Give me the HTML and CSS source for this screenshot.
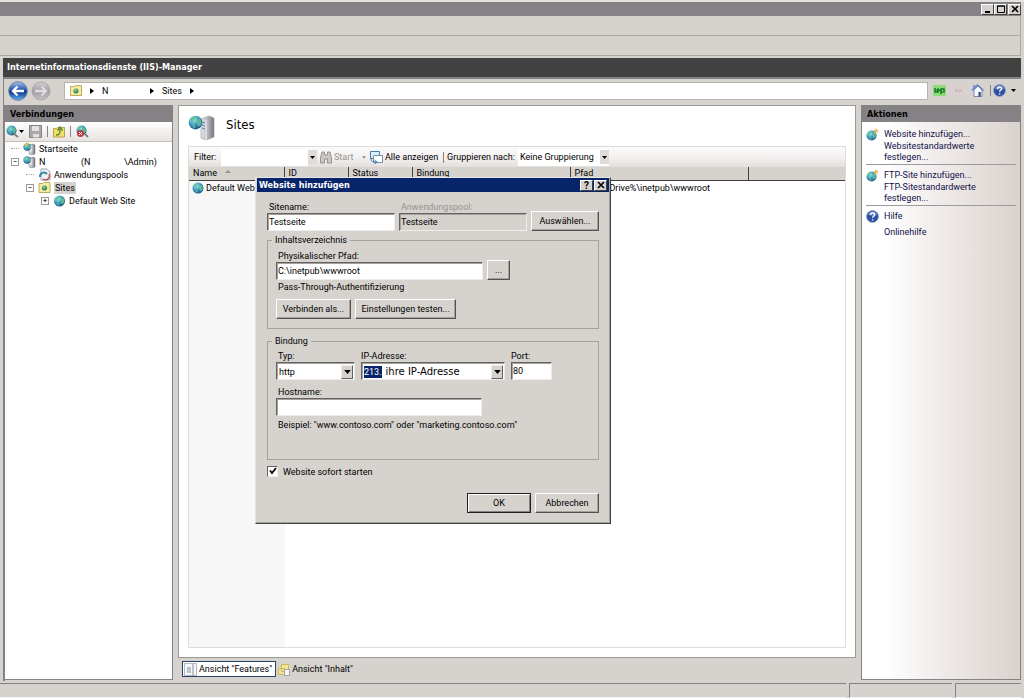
FILE: index.html
```html
<!DOCTYPE html>
<html lang="de">
<head>
<meta charset="utf-8">
<title>Internetinformationsdienste (IIS)-Manager</title>
<link rel="stylesheet" href="styles.css">
</head>
<body>
<svg class="defs" aria-hidden="true">
  <defs>
    <radialGradient id="globe-fill" cx="35%" cy="30%" r="75%">
      <stop offset="0" stop-color="#c5eef9"/><stop offset=".5" stop-color="#3c96c4"/><stop offset="1" stop-color="#1b4f83"/>
    </radialGradient>
    <linearGradient id="server-fill" x1="0" x2="1">
      <stop offset="0" stop-color="#e4e6ea"/><stop offset=".5" stop-color="#b4b7bd"/><stop offset="1" stop-color="#74777e"/>
    </linearGradient>
    <linearGradient id="nav-blue" x1="0" y1="0" x2="0" y2="1">
      <stop offset="0" stop-color="#a9c2ea"/><stop offset=".45" stop-color="#2452ad"/><stop offset=".55" stop-color="#0d358f"/><stop offset="1" stop-color="#5fb9f2"/>
    </linearGradient>
    <linearGradient id="nav-gray" x1="0" y1="0" x2="0" y2="1">
      <stop offset="0" stop-color="#d6d3d6"/><stop offset=".5" stop-color="#a19ca4"/><stop offset="1" stop-color="#c4c0c6"/>
    </linearGradient>
    <symbol id="globe" viewBox="0 0 12 12">
      <circle cx="6" cy="6" r="5.5" fill="url(#globe-fill)"/>
      <path d="M2 3.2C3 1.8 4.6 1 6 1.2l.6 1.3-1.7 1.2L4.600 5.600 2.600 6zM7 4l2.300-1.500 1.500 2.500-.3 2.600L8.500 9.500 7.300 7.300zM3.200 7.500l2.300.6.2 2L4.600 10.800z" fill="#5cc290" opacity=".9"/>
    </symbol>
    <symbol id="site-new" viewBox="0 0 13 13">
      <use href="#globe" x="0" y="2" width="11" height="11"/>
      <path d="M10 0l.7 1.800L13 2l-1.600 1.300.6 2L10 4.200 8.200 5.300l.5-2L7.200 2l2-.2z" fill="#edb65b"/>
    </symbol>
    <symbol id="server" viewBox="0 0 13 13">
      <path d="M6 3l4-1 2 1v9l-4 1-2-1z" fill="url(#server-fill)" stroke="#6e7788" stroke-width=".5"/>
      <path d="M6.500 5h3M6.500 7h3M6.500 9h3" stroke="#fff" stroke-width=".8"/>
      <use href="#globe" x="0" y="1" width="8" height="8"/>
    </symbol>
    <symbol id="server-home" viewBox="0 0 13 13">
      <use href="#server"/>
      <path d="M1 3l3-3 2 2-3 2z" fill="#e8c34e"/>
    </symbol>
    <symbol id="folder-site" viewBox="0 0 12 11">
      <path d="M.5 1.500h4l1-1h6v10H.5z" fill="#f4eca3" stroke="#b9ac5c"/>
      <circle cx="6" cy="6" r="2.600" fill="#4b9161"/><circle cx="5.500" cy="5.300" r="1" fill="#a4dbb3"/>
    </symbol>
    <symbol id="help" viewBox="0 0 13 13">
      <circle cx="6.500" cy="6.500" r="6" fill="#2c4f9f" stroke="#8fa5cf"/>
      <path d="M2 5a4.600 4.600 0 0 1 9 0Q6.500 6.500 2 5z" fill="#7f9bd8" opacity=".7"/>
      <path d="M4.600 5c0-2.700 4-2.600 4-.3 0 1.500-2 1.500-2 3M6.600 9.300v1.300" fill="none" stroke="#fff" stroke-width="1.400"/>
    </symbol>
    <symbol id="down" viewBox="0 0 5 3"><path d="M0 0h5L2.500 3z" fill="#000"/></symbol>
    <symbol id="right" viewBox="0 0 4 6"><path d="M0 0l4 3-4 3z" fill="#000"/></symbol>
    <symbol id="close" viewBox="0 0 8 8"><path d="M1 1l6 6M7 1L1 7" stroke="#000" stroke-width="1.600"/></symbol>
  </defs>
</svg>

<div class="window">
  <header class="titlebar">
    <button class="caption" aria-label="Minimieren"><svg width="8" height="8" viewBox="0 0 8 8"><path d="M1 7h5" stroke="#000" stroke-width="2"/></svg></button>
    <button class="caption" aria-label="Maximieren"><svg width="8" height="8" viewBox="0 0 8 8"><path d="M.5 1h7v6.500h-7zM0 1h8" fill="none" stroke="#000"/></svg></button>
    <button class="caption caption-gap" aria-label="Schließen"><svg width="8" height="8"><use href="#close"/></svg></button>
  </header>
  <div class="strip"></div>
  <div class="strip"></div>

  <h1 class="app-title">Internetinformationsdienste (IIS)-Manager</h1>

  <nav class="address-row">
    <button class="nav" aria-label="Zurück"><svg width="20" height="20" viewBox="0 0 20 20"><circle cx="10" cy="10" r="9.300" fill="url(#nav-blue)" stroke="#6c7fa5"/><path d="M16 10H5M9.500 5.500L5 10l4.500 4.500" fill="none" stroke="#fff" stroke-width="2.300"/></svg></button>
    <button class="nav" aria-label="Vorwärts"><svg width="20" height="20" viewBox="0 0 20 20"><circle cx="10" cy="10" r="9" fill="url(#nav-gray)" stroke="#aaa6aa"/><path d="M4 10h11M10.500 5.500L15 10l-4.500 4.500" fill="none" stroke="#dedbde" stroke-width="2.300"/></svg></button>
    <div class="address">
      <svg width="12" height="11"><use href="#folder-site"/></svg>
      <svg width="4" height="6"><use href="#right"/></svg>
      <a class="crumb crumb-host" href="#">N</a>
      <svg width="4" height="6"><use href="#right"/></svg>
      <a class="crumb" href="#">Sites</a>
      <svg width="4" height="6"><use href="#right"/></svg>
    </div>
    <div class="address-tools">
      <button class="flat" aria-label="Aktualisieren"><svg width="13" height="13" viewBox="0 0 13 13"><rect y="1" width="13" height="11" rx="1" fill="#8edc78"/><path d="M2 4v4h3V5l-1.500 1.500M11 9V5H8v4l1.500-1.500M5 6.500h3" fill="none" stroke="#157a22" stroke-width="1.500"/></svg></button>
      <button class="flat" aria-label="Anhalten"><svg width="13" height="13" viewBox="0 0 13 13"><rect y="1" width="13" height="11" rx="1" fill="#dccfd0"/><path d="M3 5l3 3M6 5L3 8M7 5l3 3M10 5L7 8" stroke="#b9aeb0"/></svg></button>
      <button class="flat" aria-label="Startseite"><svg width="13" height="13" viewBox="0 0 13 13"><path d="M3 6v6.500h8V6L7 2z" fill="#f4f8ff" stroke="#7788b4"/><path d="M.8 6.500L6.500 1l6 5.500M3 1v3" fill="none" stroke="#6683c9" stroke-width="1.500"/><path d="M7.500 8h2.200v4.500H7.500z" fill="#36457a"/></svg></button>
      <span class="divider"></span>
      <button class="flat help-menu" aria-label="Hilfe"><svg width="13" height="13"><use href="#help"/></svg><svg width="5" height="3"><use href="#down"/></svg></button>
    </div>
  </nav>

  <main class="workspace">
    <aside class="panel connections">
      <h2 class="panel-title">Verbindungen</h2>
      <div class="tree-tools">
        <button class="flat" aria-label="Verbinden"><svg width="13" height="13"><use href="#globe" width="11" height="11"/><path d="M8 9l4 3" stroke="#807f80" stroke-width="2"/></svg><svg width="5" height="3"><use href="#down"/></svg></button>
        <button class="flat" aria-label="Speichern"><svg width="13" height="13" viewBox="0 0 13 13"><path d="M.5.5h12v12H.5z" fill="#aaa7aa" stroke="#858285"/><path d="M3 1h7v5H3zM4 9h6v3.500H4z" fill="#e4e1e3"/></svg></button>
        <span class="divider"></span>
        <button class="flat" aria-label="Aufwärts"><svg width="12" height="13" viewBox="0 0 12 13"><path d="M.5 3.500h3l1-1h7v9.500H.5z" fill="#f1df6d" stroke="#b5a44b"/><path d="M3 10c4 0 4-2 4-6M4.500 5.500L7 2l2.500 3.500" fill="none" stroke="#53842d" stroke-width="1.300"/></svg></button>
        <span class="divider"></span>
        <button class="flat" aria-label="Trennen"><svg width="13" height="13" viewBox="0 0 13 13"><use href="#globe" width="11" height="11"/><circle cx="4.500" cy="8.500" r="3.500" fill="#c23a3e"/><path d="M3 7l3 3M6 7l-3 3" stroke="#fff"/><path d="M9 9l3 3" stroke="#807f80" stroke-width="2"/></svg></button>
      </div>
      <ul class="tree">
        <li class="row level-0"><span class="stub"></span><svg width="13" height="13"><use href="#server-home"/></svg>Startseite</li>
        <li class="row level-0"><button class="toggle" aria-label="Reduzieren">−</button><svg width="13" height="13"><use href="#server"/></svg><span class="host">N</span><span class="host-user">(N</span>\Admin)</li>
        <li class="row level-1"><span class="stub"></span><svg width="13" height="13" viewBox="0 0 13 13"><path d="M3 1h6l3 3v8H3z" fill="#eef2f6" stroke="#9ba9b6"/><path d="M2 9a4 4 0 0 1 7-3" fill="none" stroke="#3a86a5" stroke-width="2"/><path d="M11 6a4 4 0 0 1-6 5" fill="none" stroke="#b85754" stroke-width="1.500"/></svg>Anwendungspools</li>
        <li class="row level-1"><button class="toggle" aria-label="Reduzieren">−</button><svg width="13" height="11"><use href="#folder-site"/></svg><span class="selected">Sites</span></li>
        <li class="row level-2"><button class="toggle" aria-label="Erweitern">+</button><svg width="13" height="12"><use href="#globe"/></svg>Default Web Site</li>
      </ul>
    </aside>

    <section class="center">
      <div class="content">
        <div class="heading">
          <svg width="27" height="28" viewBox="0 0 27 28"><path d="M13 6l8-3 5 2v19l-8 3-5-2z" fill="url(#server-fill)" stroke="#96999f" stroke-width=".6"/><path d="M18 7v20" stroke="#f1f2f4"/><path d="M14 9l3 1M14 12l3 1M14 15l3 1" stroke="#5c80bd"/><use href="#globe" x="0" y="2" width="15" height="15"/></svg>
          <h2 class="page-name">Sites</h2>
        </div>
        <div class="list">
          <div class="filter-bar">
            <label for="filter">Filter:</label>
            <input class="filter-input" id="filter" type="text">
            <button class="drop" aria-label="Filterverlauf"><svg width="5" height="3"><use href="#down"/></svg></button>
            <button class="flat disabled start" disabled><svg width="12" height="13" viewBox="0 0 12 13"><path d="M2 1h2.500v3h3V1H10l1.500 6v5h-4V8h-3v4h-4V7z" fill="#ccc8c8" stroke="#969292"/></svg>Start</button>
            <svg class="start-arrow" width="4" height="3"><use href="#down"/></svg>
            <button class="flat show-all"><svg width="13" height="13" viewBox="0 0 13 13"><path d="M.5.500h9v7h-9z" fill="#e0edfb" stroke="#4479a8"/><path d="M3.500 4.500h9v7h-9z" fill="#fff" stroke="#7091b1"/><path d="M1 7c0 3 1 4 5 4M4.500 9L7 11l-2.500 2" fill="none" stroke="#3279b0"/></svg>Alle anzeigen</button>
            <span class="divider"></span>
            <label class="group-label" for="group">Gruppieren nach:</label>
            <span class="group-box"><select id="group"><option>Keine Gruppierung</option></select><span class="drop"><svg width="5" height="3"><use href="#down"/></svg></span></span>
          </div>
          <table class="sites">
            <colgroup><col class="col-name"><col class="col-id"><col class="col-status"><col class="col-binding"><col class="col-path"><col></colgroup>
            <thead><tr><th>Name<svg class="sort" width="6" height="3" viewBox="0 0 6 3"><path d="M0 3l3-3 3 3z" fill="#96938f"/></svg></th><th>ID</th><th>Status</th><th>Bindung</th><th>Pfad</th><th></th></tr></thead>
            <tbody><tr><td><span class="site-cell"><svg width="12" height="12"><use href="#globe"/></svg>Default Web Site</span></td><td></td><td></td><td></td><td>%SystemDrive%\inetpub\wwwroot</td><td></td></tr></tbody>
          </table>
        </div>
      </div>
      <div class="views">
        <button class="view active"><svg width="13" height="13" viewBox="0 0 13 13"><path d="M.5.500h12v12H.5z" fill="#f6f7f9" stroke="#b4b7c0"/><path d="M9 1v11.500M3 5h4M3 7h4M3 9h4" stroke="#848ba0"/></svg>Ansicht "Features"</button>
        <button class="view"><svg width="12" height="13" viewBox="0 0 12 13"><path d="M.5 5.500h6v6h-6zM3.500 1.500h7v7h-7z" fill="#f2e498" stroke="#cdb75c"/><path d="M6.500 6.500h5v6h-5z" fill="#f7f7f7" stroke="#a1a4af"/></svg>Ansicht "Inhalt"</button>
      </div>
    </section>

    <aside class="panel actions">
      <h2 class="panel-title">Aktionen</h2>
      <div class="action-list">
        <div class="action-group">
          <svg width="13" height="13"><use href="#site-new"/></svg>
          <a href="#">Website hinzufügen...</a>
          <a class="wide" href="#">Websitestandardwerte festlegen...</a>
        </div>
        <div class="action-group">
          <svg width="13" height="13"><use href="#site-new"/></svg>
          <a href="#">FTP-Site hinzufügen...</a>
          <a class="wide" href="#">FTP-Sitestandardwerte festlegen...</a>
        </div>
        <div class="action-group help-group">
          <svg width="13" height="13"><use href="#help"/></svg>
          <a href="#">Hilfe</a>
          <a class="wide" href="#">Onlinehilfe</a>
        </div>
      </div>
    </aside>
  </main>

  <footer class="status"><span class="status-main"></span><span class="status-mid"></span><span class="status-end"></span></footer>
</div>

<form class="dialog" role="dialog" aria-labelledby="dialog-title">
  <div class="dialog-title">
    <h2 id="dialog-title">Website hinzufügen</h2>
    <button type="button" class="caption" aria-label="Hilfe"><b>?</b></button>
    <button type="button" class="caption" aria-label="Schließen"><svg width="8" height="8"><use href="#close"/></svg></button>
  </div>
  <div class="dialog-body">
    <div class="fields">
      <div class="field name-field"><label for="name">Sitename:</label><input id="name" type="text" value="Testseite"></div>
      <div class="field name-field"><label class="disabled" for="pool">Anwendungspool:</label><input id="pool" type="text" value="Testseite" readonly></div>
      <button type="button" class="push grow">Auswählen...</button>
    </div>
    <fieldset class="directory">
      <legend>Inhaltsverzeichnis</legend>
      <div class="fields">
        <div class="field path-field"><label for="path">Physikalischer Pfad:</label><input id="path" type="text" value="C:\inetpub\wwwroot"></div>
        <button type="button" class="push browse">...</button>
      </div>
      <p class="note">Pass-Through-Authentifizierung</p>
      <div class="fields">
        <button type="button" class="push connect">Verbinden als...</button>
        <button type="button" class="push test">Einstellungen testen...</button>
      </div>
    </fieldset>
    <fieldset class="binding">
      <legend>Bindung</legend>
      <div class="fields binding-fields">
        <div class="field type-field"><label for="type">Typ:</label><span class="combo"><select id="type"><option>http</option></select><span class="combo-arrow"><svg width="7" height="4"><use href="#down"/></svg></span></span></div>
        <div class="field ip-field"><label for="ip">IP-Adresse:</label><span class="combo"><mark>213.</mark><input id="ip" type="text" value="ihre IP-Adresse"><button type="button" class="combo-arrow" aria-label="Adressen"><svg width="7" height="4"><use href="#down"/></svg></button></span></div>
        <div class="field port-field"><label for="port">Port:</label><input id="port" type="text" value="80"></div>
      </div>
      <div class="field host-field"><label for="host">Hostname:</label><input id="host" type="text"></div>
      <p class="example">Beispiel: "www.contoso.com" oder "marketing.contoso.com"</p>
    </fieldset>
    <label class="check"><input type="checkbox" checked><svg class="tick" width="8" height="8" viewBox="0 0 8 8"><path d="M1 3.500l2 2.500 4-5" fill="none" stroke="#000" stroke-width="1.800"/></svg>Website sofort starten</label>
    <div class="dialog-actions">
      <button type="submit" class="push default">OK</button>
      <button type="button" class="push">Abbrechen</button>
    </div>
  </div>
</form>
</body>
</html>
```
FILE: styles.css
```css
* { box-sizing: border-box; }

:root {
  --face: #d6d3ce;
  --shadow: #848284;
  --dark: #424142;
  --line: #9c9a96;
  --title-font: "DejaVu Sans Condensed", "DejaVu Sans", sans-serif;
}

body {
  margin: 0;
  background: var(--face);
  color: #000;
  font-family: Roboto, "Liberation Sans", sans-serif;
  font-size: 9px;
  line-height: 12px;
}

h1, h2, p, ul { margin: 0; padding: 0; }
ul { list-style: none; }
svg { display: block; flex: none; }
a { color: inherit; text-decoration: none; }
button, input, select { margin: 0; font: inherit; color: inherit; border-radius: 0; }
.defs { position: absolute; width: 0; height: 0; }

.window {
  display: flex;
  flex-direction: column;
  height: 100vh;
  padding-right: 3px;
  border-top: 2px solid #e4e2de;
}

.titlebar {
  display: flex;
  justify-content: flex-end;
  align-items: center;
  height: 14px;
  background: var(--shadow);
}

.caption {
  display: grid;
  place-items: center;
  width: 13px;
  height: 11px;
  padding: 0;
  background: var(--face);
  border: 1px solid;
  border-color: #fff #424142 #424142 #fff;
  font-size: 10px;
  line-height: 9px;
}
.caption-gap { margin-left: 1px; }

.strip { height: 20px; border-bottom: 1px solid #aaa7a2; border-right: 1px solid #aaa7a2; }

.app-title {
  height: 19px;
  margin: 2px 0 0 3px;
  padding: 0 4px;
  background: #424142;
  color: #fff;
  font-family: var(--title-font);
  font-stretch: condensed;
  font-size: 9px;
  line-height: 19px;
}

.address-row {
  display: flex;
  align-items: center;
  height: 28px;
  margin-left: 3px;
  padding: 0 5px 3px 4px;
  border-top: 2px solid var(--shadow);
  border-left: 1px solid var(--shadow);
}
.nav { padding: 0; margin-right: 3px; border: 0; background: none; }
.address {
  display: flex;
  flex: 1;
  align-items: center;
  gap: 8px;
  height: 18px;
  margin: 0 5px 0 10px;
  padding: 0 5px;
  background: #fff;
  border: 1px solid #b5b2ad;
}
.crumb-host { width: 40px; }
.address-tools { display: flex; align-items: center; gap: 6px; }
.address-tools .divider { margin-right: -4px; }
.flat { display: flex; align-items: center; gap: 2px; padding: 0; border: 0; background: none; white-space: nowrap; }
.help-menu { gap: 5px; }
.divider { width: 1px; height: 11px; background: var(--shadow); }

.workspace {
  display: grid;
  grid-template-columns: 168px minmax(0, 1fr) 160px;
  gap: 5px;
  flex: 1;
  min-height: 0;
  margin-left: 3px;
  border-left: 2px solid var(--shadow);
  padding-bottom: 1px;
}

.panel { background: #fff; border: 1px solid var(--shadow); border-top: 0; min-height: 0; }
.connections { border-left: 0; }
.panel-title {
  height: 17px;
  padding-left: 5px;
  background: var(--shadow);
  color: #000;
  font-family: var(--title-font);
  font-stretch: condensed;
  font-size: 9px;
  line-height: 18px;
}
.tree-tools {
  display: flex;
  align-items: center;
  gap: 5px;
  height: 20px;
  padding-left: 1px;
  background: linear-gradient(#fff, #e7e3e1);
  border-bottom: 1px solid #c6c3be;
}
.tree-tools .flat { gap: 0; }

.row { display: flex; align-items: center; gap: 3px; height: 13px; white-space: nowrap; }
.tree .row svg { margin-left: 1px; }
.level-0 { padding-left: 6px; }
.level-1 { padding-left: 21px; }
.level-2 { padding-left: 36px; }
.stub { width: 8px; height: 1px; border-top: 1px dotted #aaa7a2; }
.toggle {
  display: grid;
  place-items: center;
  width: 8px;
  height: 8px;
  padding: 0;
  background: #fff;
  border: 1px solid #9c9a9c;
  font-size: 8px;
  line-height: 6px;
}
.host { width: 39px; }
.host-user { width: 40px; }
.selected { background: var(--face); padding: 0 1px; }

.center { display: flex; flex-direction: column; min-width: 0; min-height: 0; }
.content {
  display: flex;
  flex-direction: column;
  flex: 1;
  min-height: 0;
  padding: 0 9px 9px;
  background: #fff;
  border: 1px solid var(--line);
}
.heading { display: flex; align-items: center; gap: 11px; height: 40px; padding-top: 2px; }
.page-name {
  padding-bottom: 4px;
  font-family: var(--title-font);
  font-stretch: condensed;
  font-size: 13px;
  font-weight: normal;
  line-height: 16px;
}

.list {
  flex: 1;
  min-height: 0;
  border: 1px solid #dedbd8;
  background: linear-gradient(90deg, #f7f7f8 96px, #fff 96px);
}
.filter-bar {
  display: flex;
  align-items: center;
  height: 20px;
  padding-left: 5px;
  background: linear-gradient(#fafafa, #f5f1f1 50%, #e2dfdc);
  white-space: nowrap;
}
.filter-bar label[for="filter"] { width: 27px; }
.filter-input { width: 87px; height: 17px; padding: 0 2px; border: 0; background: #fff; }
.drop { display: grid; place-items: center; width: 9px; height: 14px; padding: 0; border: 0; background: #dedbd8; }
.start { width: 36px; margin-left: 3px; }
.disabled, .flat:disabled { color: #96938f; }
.start-arrow { margin: 0 4px 0 6px; opacity: .4; }
.show-all { width: 67px; }
.filter-bar .divider { margin: 0 3px 0 6px; }
.group-label { width: 71px; }
.group-box { display: flex; align-items: center; background: #fff; }
.group-box select { width: 82px; height: 17px; padding: 0 2px; border: 0; background: #fff; appearance: none; }

.sites { width: 100%; table-layout: fixed; border-collapse: collapse; text-align: left; }
.col-name { width: 95px; }
.col-id { width: 64px; }
.col-status { width: 64px; }
.col-binding { width: 158px; }
.col-path { width: 178px; }
.sites th {
  height: 13px;
  padding: 0 4px;
  background: var(--face);
  border-bottom: 1px solid var(--dark);
  border-right: 1px solid var(--dark);
  font-weight: normal;
  line-height: 12px;
}
.sites th:last-child { border-right: 0; }
.sort { display: inline-block; margin: 0 0 3px 8px; }
.sites td { height: 15px; padding: 0 3px; white-space: nowrap; }
.site-cell { display: flex; align-items: center; gap: 2px; }

.views { display: flex; align-items: center; height: 22px; padding-left: 4px; }
.view {
  display: flex;
  align-items: center;
  gap: 2px;
  height: 16px;
  padding: 0 3px 0 1px;
  border: 1px solid transparent;
  background: none;
}
.view.active { background: #fff; border-color: #29416b; }

.actions { display: flex; flex-direction: column; }
.action-list {
  flex: 1;
  padding: 5px 4px 0;
  background: linear-gradient(90deg, #fff 15%, #f5f0f0 40%, #d9d2cd);
  color: #101048;
}
.action-group {
  display: grid;
  grid-template-columns: 13px 1fr;
  column-gap: 5px;
  align-items: center;
  margin-bottom: 3px;
  border-bottom: 1px solid #9c9a9c;
  line-height: 14px;
}
.wide { grid-column: 2; width: 100px; margin-bottom: 1px; line-height: 11px; }
.help-group { border: 0; row-gap: 4px; }

.status { display: flex; gap: 3px; height: 15px; margin-top: 2px; }
.status span { border-top: 1px solid var(--shadow); border-bottom: 1px solid #f5f3f0; border-left: 1px solid var(--shadow); }
.status .status-main { flex: 1; border-left: 0; }
.status-mid { width: 103px; }
.status-end { width: 66px; }

/* Dialog */
.dialog {
  position: absolute;
  left: 255px;
  top: 177px;
  width: 356px;
  background: var(--face);
  border: 1px solid;
  border-color: #e7e5e1 #424142 #424142 #e7e5e1;
  box-shadow: inset -1px -1px #a5a29c;
}
.dialog-title {
  display: flex;
  align-items: center;
  gap: 1px;
  height: 14px;
  margin: 0 1px;
  padding: 0 2px;
  background: #08246b;
  color: #fff;
}
.dialog-title h2 { flex: 1; font-family: var(--title-font); font-stretch: condensed; font-size: 9px; }
.dialog-title .caption { color: #000; }
.dialog-body { padding: 9px 11px 10px; }
.fields { display: flex; align-items: flex-end; gap: 4px; }
.field { display: flex; flex-direction: column; }
.field label { padding-left: 2px; }
.field > input, .combo {
  width: 100%;
  height: 18px;
  padding: 0 1px;
  background: #fff;
  border: 1px solid;
  border-color: #636163 #efedea #efedea #636163;
  box-shadow: inset 1px 1px #a5a29c;
}
.field > input:read-only { background: var(--face); }
.name-field { width: 128px; }
.push {
  height: 20px;
  padding: 0 6px;
  background: var(--face);
  border: 1px solid;
  border-color: #fff #525152 #525152 #fff;
  box-shadow: inset -1px -1px #a5a29c;
  white-space: nowrap;
}
.grow { flex: 1; }

fieldset {
  min-width: 0;
  margin: 0;
  padding: 4px 9px 9px 8px;
  border: 1px solid #a5a29c;
}
legend { padding: 0 3px; margin-left: -4px; line-height: 12px; }
.directory { margin-top: 3px; }
.path-field { width: 207px; }
.browse { width: 23px; }
.note { margin: 1px 0 6px; padding-left: 2px; }
.connect { width: 75px; }
.test { width: 101px; }
.directory .push { padding: 0; }

.binding { margin-top: 6px; padding-top: 3px; padding-bottom: 28px; }
.binding-fields { gap: 6px; }
.type-field { width: 79px; }
.ip-field { width: 144px; }
.ip-field label, .port-field label { padding-left: 0; }
.port-field { width: 41px; }
.host-field { width: 206px; margin-top: 6px; }
.example { margin-top: 3px; padding-left: 2px; white-space: nowrap; }

.combo { display: flex; align-items: center; padding: 2px 1px 1px 2px; }
.combo select, .combo input { flex: 1; min-width: 0; height: 13px; padding: 0; border: 0; background: none; appearance: none; }
.combo input { margin-left: 4px; font-family: "DejaVu Sans", sans-serif; font-size: 10px; }
.combo mark { background: #08246b; color: #fff; }
.combo-arrow {
  display: grid;
  place-items: center;
  width: 12px;
  height: 14px;
  padding: 0;
  background: var(--face);
  border: 1px solid;
  border-color: #efedea #636163 #636163 #efedea;
}

.check { display: flex; align-items: center; gap: 5px; height: 13px; margin-top: 5px; position: relative; }
.check input {
  width: 11px;
  height: 11px;
  appearance: none;
  background: #fff;
  border: 1px solid;
  border-color: #636163 #efedea #efedea #636163;
}
.tick { position: absolute; left: 2px; top: 2px; }
.dialog-actions { display: flex; justify-content: flex-end; gap: 4px; margin-top: 15px; }
.dialog-actions .push { width: 64px; }
.push.default { border-color: #212021; box-shadow: inset 1px 1px #fff, inset -1px -1px #848284; }
```
